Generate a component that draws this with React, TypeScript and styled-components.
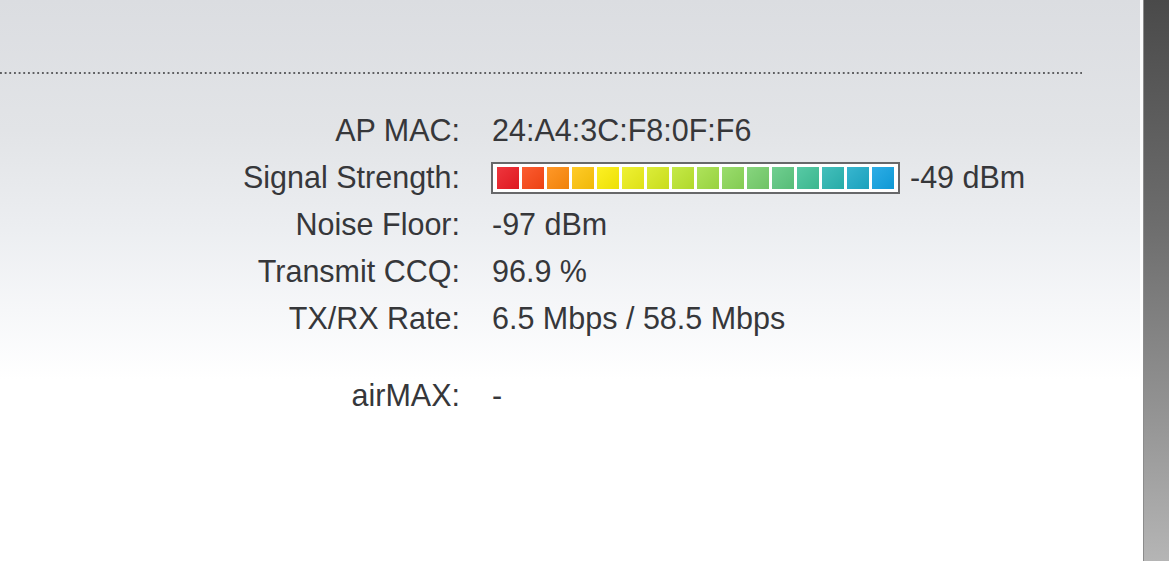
import React from 'react';
import styled, {createGlobalStyle} from "styled-components";

const GlobalStyle = createGlobalStyle`
  html, body {
    margin: 0;
    padding: 0;
    height: 100%;
    overflow: hidden;
  }
  body {
    font-family: "Liberation Sans", Arial, sans-serif;
  }
`;

const Page = styled.div`
  display: flex;
  width: 1169px;
  height: 561px;
  background: linear-gradient(to bottom, #dbdde1 0px, #e2e4e7 130px, #eceef1 230px, #f6f7f9 310px, #ffffff 380px);
`;

const Content = styled.main`
  flex: 1;
  padding-top: 72px;
  border-right: 3px solid rgba(255, 255, 255, 0.85);
`;

const DottedRule = styled.div`
  width: 1082px;
  height: 2px;
  background-image: linear-gradient(to right, #5e5f62 50%, transparent 50%);
  background-size: 4.67px 2px;
  background-repeat: repeat-x;
`;

const InfoGrid = styled.dl`
  display: grid;
  grid-template-columns: 460px auto;
  column-gap: 32px;
  margin: 33px 0 0;
  font-size: 30.5px;
  line-height: 47px;
  color: #36373a;
`;

const Label = styled.dt<{ $gap?: boolean }>`
  text-align: right;
  margin-top: ${p => (p.$gap ? "30px" : "0")};
`;

const Value = styled.dd<{ $gap?: boolean }>`
  margin: 0;
  margin-top: ${p => (p.$gap ? "30px" : "0")};
  display: flex;
  align-items: center;
`;

const Meter = styled.div`
  display: flex;
  gap: 3px;
  padding: 3px 4px;
  border: 2px solid #67686a;
  background: #ffffff;
  margin-right: 10px;
  margin-left: -1px;
`;

const Cell = styled.span<{ $color: string }>`
  display: block;
  width: 22px;
  height: 22px;
  background: linear-gradient(135deg, rgba(255, 255, 255, 0.12), rgba(0, 0, 0, 0.06)), ${p => p.$color};
`;

const SideBar = styled.aside`
  width: 25px;
  border-left: 1px solid #8c8c8c;
  background: linear-gradient(to bottom, #4a4a4a 0%, #6d6d6d 40%, #959595 75%, #b5b5b5 100%);
`;

const cellColors = [
  "#ec1a22", "#fb4614", "#ff8a0a", "#ffc40a", "#fcee06", "#ecef18", "#d6ea1e", "#bce62e",
  "#a2df44", "#8cd858", "#76cf6c", "#5cc880", "#40c298", "#2ab6b2", "#1cabc8", "#10a2e2",
];

export default function App() {
  return <Page>
    <GlobalStyle/>
    <Content>
      <DottedRule/>
      <InfoGrid>
        <Label>AP MAC:</Label>
        <Value>24:A4:3C:F8:0F:F6</Value>
        <Label>Signal Strength:</Label>
        <Value>
          <Meter>
            {cellColors.map(c => <Cell key={c} $color={c}/>)}
          </Meter>
          -49 dBm
        </Value>
        <Label>Noise Floor:</Label>
        <Value>-97 dBm</Value>
        <Label>Transmit CCQ:</Label>
        <Value>96.9 %</Value>
        <Label>TX/RX Rate:</Label>
        <Value>6.5 Mbps / 58.5 Mbps</Value>
        <Label $gap>airMAX:</Label>
        <Value $gap>-</Value>
      </InfoGrid>
    </Content>
    <SideBar/>
  </Page>;
}
